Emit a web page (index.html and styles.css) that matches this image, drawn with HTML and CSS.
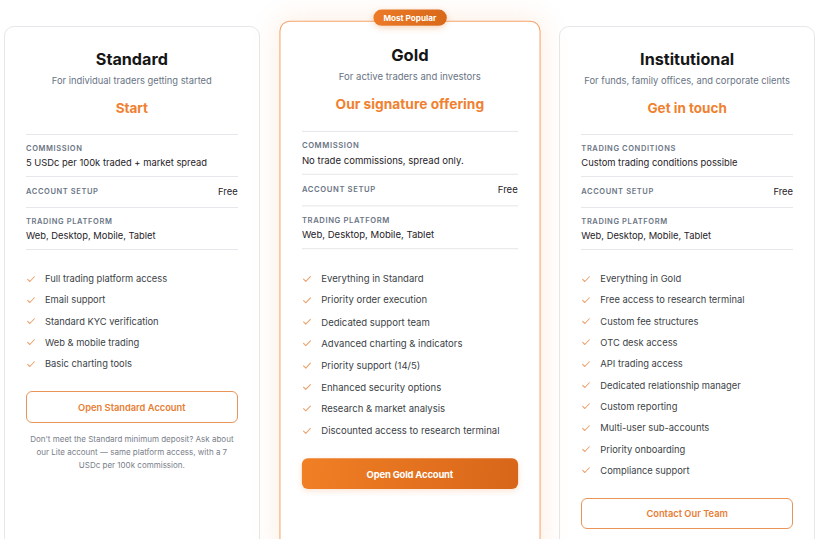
FILE: index.html
```html
<!DOCTYPE html>
<html lang="en">
<head>
<meta charset="utf-8">
<title>Account plans</title>
<link rel="stylesheet" href="styles.css">
</head>
<body>
<main class="plans">

  <section class="card">
    <h2 class="card-title">Standard</h2>
    <p class="card-subtitle">For individual traders getting started</p>
    <p class="card-tagline">Start</p>
    <dl class="specs">
      <div class="spec"><dt>Commission</dt><dd>5 USDc per 100k traded + market spread</dd></div>
      <div class="spec spec-inline"><dt>Account setup</dt><dd>Free</dd></div>
      <div class="spec"><dt>Trading platform</dt><dd>Web, Desktop, Mobile, Tablet</dd></div>
    </dl>
    <ul class="features">
      <li><svg class="check" viewBox="0 0 12 12"><path d="M2 6.4l2.6 2.6L10 3.3"/></svg>Full trading platform access</li>
      <li><svg class="check" viewBox="0 0 12 12"><path d="M2 6.4l2.6 2.6L10 3.3"/></svg>Email support</li>
      <li><svg class="check" viewBox="0 0 12 12"><path d="M2 6.4l2.6 2.6L10 3.3"/></svg>Standard KYC verification</li>
      <li><svg class="check" viewBox="0 0 12 12"><path d="M2 6.4l2.6 2.6L10 3.3"/></svg>Web &amp; mobile trading</li>
      <li><svg class="check" viewBox="0 0 12 12"><path d="M2 6.4l2.6 2.6L10 3.3"/></svg>Basic charting tools</li>
    </ul>
    <a class="btn btn-outline" href="#">Open Standard Account</a>
    <p class="card-note">Don't meet the Standard minimum deposit? Ask about our Lite account — same platform access, with a 7 USDc per 100k commission.</p>
  </section>

  <section class="card card-featured">
    <span class="badge">Most Popular</span>
    <h2 class="card-title">Gold</h2>
    <p class="card-subtitle">For active traders and investors</p>
    <p class="card-tagline">Our signature offering</p>
    <dl class="specs">
      <div class="spec"><dt>Commission</dt><dd>No trade commissions, spread only.</dd></div>
      <div class="spec spec-inline"><dt>Account setup</dt><dd>Free</dd></div>
      <div class="spec"><dt>Trading platform</dt><dd>Web, Desktop, Mobile, Tablet</dd></div>
    </dl>
    <ul class="features">
      <li><svg class="check" viewBox="0 0 12 12"><path d="M2 6.4l2.6 2.6L10 3.3"/></svg>Everything in Standard</li>
      <li><svg class="check" viewBox="0 0 12 12"><path d="M2 6.4l2.6 2.6L10 3.3"/></svg>Priority order execution</li>
      <li><svg class="check" viewBox="0 0 12 12"><path d="M2 6.4l2.6 2.6L10 3.3"/></svg>Dedicated support team</li>
      <li><svg class="check" viewBox="0 0 12 12"><path d="M2 6.4l2.6 2.6L10 3.3"/></svg>Advanced charting &amp; indicators</li>
      <li><svg class="check" viewBox="0 0 12 12"><path d="M2 6.4l2.6 2.6L10 3.3"/></svg>Priority support (14/5)</li>
      <li><svg class="check" viewBox="0 0 12 12"><path d="M2 6.4l2.6 2.6L10 3.3"/></svg>Enhanced security options</li>
      <li><svg class="check" viewBox="0 0 12 12"><path d="M2 6.4l2.6 2.6L10 3.3"/></svg>Research &amp; market analysis</li>
      <li><svg class="check" viewBox="0 0 12 12"><path d="M2 6.4l2.6 2.6L10 3.3"/></svg>Discounted access to research terminal</li>
    </ul>
    <a class="btn btn-solid" href="#">Open Gold Account</a>
  </section>

  <section class="card">
    <h2 class="card-title">Institutional</h2>
    <p class="card-subtitle">For funds, family offices, and corporate clients</p>
    <p class="card-tagline">Get in touch</p>
    <dl class="specs">
      <div class="spec"><dt>Trading conditions</dt><dd>Custom trading conditions possible</dd></div>
      <div class="spec spec-inline"><dt>Account setup</dt><dd>Free</dd></div>
      <div class="spec"><dt>Trading platform</dt><dd>Web, Desktop, Mobile, Tablet</dd></div>
    </dl>
    <ul class="features">
      <li><svg class="check" viewBox="0 0 12 12"><path d="M2 6.4l2.6 2.6L10 3.3"/></svg>Everything in Gold</li>
      <li><svg class="check" viewBox="0 0 12 12"><path d="M2 6.4l2.6 2.6L10 3.3"/></svg>Free access to research terminal</li>
      <li><svg class="check" viewBox="0 0 12 12"><path d="M2 6.4l2.6 2.6L10 3.3"/></svg>Custom fee structures</li>
      <li><svg class="check" viewBox="0 0 12 12"><path d="M2 6.4l2.6 2.6L10 3.3"/></svg>OTC desk access</li>
      <li><svg class="check" viewBox="0 0 12 12"><path d="M2 6.4l2.6 2.6L10 3.3"/></svg>API trading access</li>
      <li><svg class="check" viewBox="0 0 12 12"><path d="M2 6.4l2.6 2.6L10 3.3"/></svg>Dedicated relationship manager</li>
      <li><svg class="check" viewBox="0 0 12 12"><path d="M2 6.4l2.6 2.6L10 3.3"/></svg>Custom reporting</li>
      <li><svg class="check" viewBox="0 0 12 12"><path d="M2 6.4l2.6 2.6L10 3.3"/></svg>Multi-user sub-accounts</li>
      <li><svg class="check" viewBox="0 0 12 12"><path d="M2 6.4l2.6 2.6L10 3.3"/></svg>Priority onboarding</li>
      <li><svg class="check" viewBox="0 0 12 12"><path d="M2 6.4l2.6 2.6L10 3.3"/></svg>Compliance support</li>
    </ul>
    <a class="btn btn-outline" href="#">Contact Our Team</a>
  </section>

</main>
</body>
</html>
```
FILE: styles.css
```css
* { box-sizing: border-box; }

html, body {
  margin: 0;
  padding: 0;
  background: #ffffff;
}

body {
  font-family: Inter, "Noto Sans", "Liberation Sans", sans-serif;
  color: #1f2937;
}

.plans {
  display: grid;
  grid-template-columns: repeat(3, 1fr);
  gap: 22px;
  padding: 26px 5px 0 4px;
  align-items: stretch;
}

.card {
  position: relative;
  display: flex;
  flex-direction: column;
  background: #ffffff;
  border: 1px solid #e6e7ea;
  border-radius: 10px;
  padding: 21px 21px 22px;
}

.card-featured {
  border: 1.5px solid #f3a46b;
  transform: scale(1.02);
  box-shadow: 0 0 28px rgba(240, 128, 50, 0.16);
  z-index: 1;
}

.badge {
  position: absolute;
  top: -12px;
  left: 50%;
  transform: translateX(-50%);
  padding: 0 10px;
  height: 16px;
  line-height: 16px;
  border-radius: 8px;
  background: linear-gradient(90deg, #ec7a27, #d8691a);
  color: #ffffff;
  font-size: 8px;
  font-weight: 700;
  white-space: nowrap;
  box-shadow: 0 2px 6px rgba(230, 120, 40, 0.3);
}

.card-title {
  margin: 0;
  text-align: center;
  font-size: 16.2px;
  line-height: 23px;
  font-weight: 700;
  color: #161616;
}

.card-subtitle {
  margin: 3px 0 0;
  text-align: center;
  font-size: 9.35px;
  line-height: 14px;
  color: #687384;
}

.card-tagline {
  margin: 11px 0 0;
  text-align: center;
  font-size: 13.5px;
  line-height: 18px;
  font-weight: 700;
  color: #ef8131;
}

.specs {
  margin: 17px 0 0;
  border-top: 1px solid #e6e7ea;
}

.spec {
  padding: 8px 0 7px;
  border-bottom: 1px solid #e6e7ea;
}

.spec dt {
  font-size: 7.5px;
  line-height: 12px;
  font-weight: 600;
  letter-spacing: 0.6px;
  text-transform: uppercase;
  color: #6b7585;
}

.spec dd {
  margin: 1px 0 0;
  font-size: 9.4px;
  line-height: 13px;
  color: #1f2228;
}

.spec-inline {
  display: flex;
  justify-content: space-between;
  align-items: center;
  padding: 8px 0;
}

.spec-inline dd {
  margin: 0;
  line-height: 14px;
}

.features {
  list-style: none;
  margin: 21px 0 0;
  padding: 0;
  display: flex;
  flex-direction: column;
  gap: 6.33px;
}

.features li {
  display: flex;
  align-items: center;
  font-size: 9.35px;
  line-height: 15px;
  color: #3b3f46;
}

.check {
  width: 10px;
  height: 10px;
  margin: 0 9px 0 0;
  flex: none;
  fill: none;
  stroke: #eaa36f;
  stroke-width: 1.3;
  stroke-linecap: round;
  stroke-linejoin: round;
}

.btn {
  display: flex;
  align-items: center;
  justify-content: center;
  margin-top: 20px;
  height: 32px;
  border-radius: 6px;
  font-size: 9.3px;
  font-weight: 600;
  text-decoration: none;
}

.btn-outline {
  border: 1px solid #e9955a;
  color: #e67e34;
  background: #ffffff;
}

.btn-solid {
  height: 30px;
  color: #ffffff;
  font-weight: 700;
  letter-spacing: -0.2px;
  background: linear-gradient(100deg, #f07f25, #d8661a);
  box-shadow: 0 2px 6px rgba(230, 120, 40, 0.2);
}

.card:last-child .btn {
  margin-top: 20px;
  height: 31px;
}

.card-note {
  margin: 10px 2px 0;
  text-align: center;
  font-size: 8px;
  line-height: 13px;
  color: #7a808a;
}
```
